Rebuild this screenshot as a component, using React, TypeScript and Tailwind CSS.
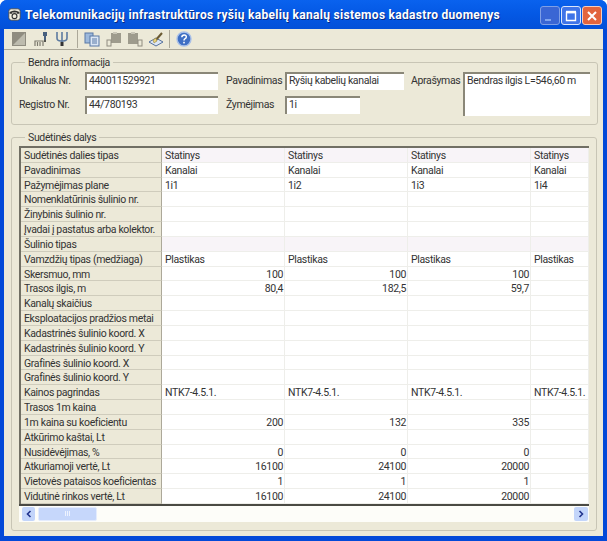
import type { ReactNode } from 'react'

const rows: { label: string; cells: string[]; right?: boolean; tint?: boolean }[] = [
  { label: 'Sudėtinės dalies tipas', cells: ['Statinys', 'Statinys', 'Statinys', 'Statinys'], tint: true },
  { label: 'Pavadinimas', cells: ['Kanalai', 'Kanalai', 'Kanalai', 'Kanalai'] },
  { label: 'Pažymėjimas plane', cells: ['1i1', '1i2', '1i3', '1i4'] },
  { label: 'Nomenklatūrinis šulinio nr.', cells: [] },
  { label: 'Žinybinis šulinio nr.', cells: [] },
  { label: 'Įvadai į pastatus arba kolektor.', cells: [] },
  { label: 'Šulinio tipas', cells: [], tint: true },
  { label: 'Vamzdžių tipas (medžiaga)', cells: ['Plastikas', 'Plastikas', 'Plastikas', 'Plastikas'] },
  { label: 'Skersmuo, mm', cells: ['100', '100', '100', ''], right: true },
  { label: 'Trasos ilgis, m', cells: ['80,4', '182,5', '59,7', ''], right: true },
  { label: 'Kanalų skaičius', cells: [] },
  { label: 'Eksploatacijos pradžios metai', cells: [] },
  { label: 'Kadastrinės šulinio koord. X', cells: [] },
  { label: 'Kadastrinės šulinio koord. Y', cells: [] },
  { label: 'Grafinės šulinio koord. X', cells: [] },
  { label: 'Grafinės šulinio koord. Y', cells: [] },
  { label: 'Kainos pagrindas', cells: ['NTK7-4.5.1.', 'NTK7-4.5.1.', 'NTK7-4.5.1.', 'NTK7-4.5.1.'] },
  { label: 'Trasos 1m kaina', cells: [] },
  { label: '1m kaina su koeficientu', cells: ['200', '132', '335', ''], right: true },
  { label: 'Atkūrimo kaštai, Lt', cells: [] },
  { label: 'Nusidėvėjimas, %', cells: ['0', '0', '0', ''], right: true },
  { label: 'Atkuriamoji vertė, Lt', cells: ['16100', '24100', '20000', ''], right: true },
  { label: 'Vietovės pataisos koeficientas', cells: ['1', '1', '1', ''], right: true },
  { label: 'Vidutinė rinkos vertė, Lt', cells: ['16100', '24100', '20000', ''], right: true },
]

const colClass = ['w-[123px]', 'w-[123px]', 'w-[123px]', 'w-[58px]']

const Field = ({ value, className }: { value: string; className: string }) => (
  <div className={`bg-white border-t-2 border-l-2 border-t-[#8a8778] border-l-[#8a8778] pl-[2px] leading-[14px] whitespace-nowrap overflow-hidden ${className}`}>
    {value}
  </div>
)

const Tool = ({ children, w = 'w-[16px]' }: { children: ReactNode; w?: string }) => (
  <svg viewBox="0 0 16 16" className={`h-[16px] shrink-0 ${w}`}>
    {children}
  </svg>
)

const Sep = () => <div className="w-[1px] h-[18px] bg-[#aca899] shrink-0" />

const Toolbar = () => (
  <div className="h-[21px] shrink-0 flex items-center pl-[7px] border-b border-[#aca899]">
    <Tool>
      <rect x="1" y="1" width="14" height="14" fill="#8f8c80" />
      <path d="M2 14 L14 2 L14 14 Z" fill="#bdbbae" />
    </Tool>
    <div className="w-[7px]" />
    <Tool>
      <path d="M1 15 V10 H9 V15 M3.5 11 V15 M6 11 V15" fill="none" stroke="#7c7a6e" strokeWidth="1.2" />
      <path d="M9 1 H13 V5 H12 V9 H10 V5 H9 Z" fill="#47607f" />
      <path d="M11 9 V11" stroke="#222" strokeWidth="1.5" />
    </Tool>
    <div className="w-[4px]" />
    <Tool>
      <path d="M3 1 V7 Q3 10 7 10 H9 Q13 10 13 7 V1" fill="none" stroke="#5d7aa0" strokeWidth="1.6" />
      <path d="M8 1 V14" stroke="#5d7aa0" strokeWidth="1.6" />
      <rect x="6.5" y="11" width="3" height="4" fill="#333" />
    </Tool>
    <div className="w-[7px]" />
    <Sep />
    <div className="w-[6px]" />
    <Tool>
      <rect x="1" y="2" width="8" height="10" fill="#9db9dc" stroke="#5878a6" />
      <rect x="6" y="5" width="9" height="10" fill="#dbe6f4" stroke="#5878a6" />
      <path d="M8 8 H13 M8 10 H13 M8 12 H13" stroke="#5878a6" />
    </Tool>
    <div className="w-[6px]" />
    <Tool>
      <rect x="5" y="2" width="10" height="10" fill="#9e9b8d" />
      <rect x="1" y="9" width="4" height="6" fill="none" stroke="#8f8c80" />
      <rect x="7" y="1" width="4" height="2" fill="#c9c6b8" />
    </Tool>
    <div className="w-[5px]" />
    <Tool>
      <rect x="1" y="2" width="10" height="11" fill="#9e9b8d" />
      <rect x="11" y="9" width="4" height="6" fill="none" stroke="#8f8c80" />
      <rect x="4" y="1" width="4" height="2" fill="#c9c6b8" />
    </Tool>
    <div className="w-[5px]" />
    <Tool>
      <path d="M1 11 L8 7 L15 11 L8 15 Z" fill="#dce6f5" stroke="#54709c" />
      <path d="M7 10 L14 2" stroke="#6b5a32" strokeWidth="2" />
      <path d="M5 9 L8 7 L9 10 L6 12 Z" fill="#e8d27a" stroke="#8c7a3a" strokeWidth="0.5" />
    </Tool>
    <div className="w-[5px]" />
    <Sep />
    <div className="w-[6px]" />
    <Tool>
      <circle cx="8" cy="8" r="7" fill="#3f6fc4" stroke="#a9c0e8" strokeWidth="1.4" />
      <path d="M5.8 6.2 Q6 4 8.2 4 Q10.4 4 10.3 6 Q10.2 7.2 8.8 7.9 Q8 8.4 8 9.6" fill="none" stroke="#fff" strokeWidth="1.5" />
      <rect x="7.2" y="10.8" width="1.6" height="1.6" fill="#fff" />
    </Tool>
  </div>
)

const WinButton = ({ children, className }: { children: ReactNode; className: string }) => (
  <div className={`w-[20px] h-[19px] rounded-[3px] border flex items-center justify-center shrink-0 ${className}`}>
    <svg viewBox="0 0 14 14" className="w-[14px] h-[14px]">
      {children}
    </svg>
  </div>
)

const TitleBar = () => (
  <div className="h-[29px] shrink-0 flex items-center pl-[8px] pr-[5px] rounded-t-[7px] bg-gradient-to-b from-[#0a62ee] via-[#0458e4] to-[#0350d8]">
    <svg viewBox="0 0 16 16" className="w-[13px] h-[13px] shrink-0">
      <rect x="1" y="1" width="14" height="14" rx="3" fill="#f0ede0" stroke="#444" />
      <path d="M2 5 Q8 1 14 5 V7 H11 V5.5 H5 V7 H2 Z" fill="#333" />
      <circle cx="8" cy="10" r="3" fill="none" stroke="#333" strokeWidth="1.4" />
    </svg>
    <div className="ml-[4px] pt-[1px] flex-1 whitespace-nowrap text-white font-bold text-[12px] tracking-[0.3px] font-['Roboto',sans-serif] [text-shadow:1px_1px_0_#0a2a80]">
      Telekomunikacijų infrastruktūros ryšių kabelių kanalų sistemos kadastro duomenys
    </div>
    <div className="flex gap-[1px] mt-[2px]">
      <WinButton className="bg-[#3a66d4] border-[#7f9fe6]">
        <rect x="2" y="10" width="6" height="2" fill="#7fa4ee" />
      </WinButton>
      <WinButton className="bg-[#3f74e8] border-[#dbe6fb]">
        <path d="M2.5 3.5 H11.5 V11.5 H2.5 Z" fill="none" stroke="#fff" strokeWidth="1.4" />
        <path d="M2 3 H12" stroke="#fff" strokeWidth="2.4" />
      </WinButton>
      <WinButton className="bg-[#e2653e] border-[#f6cdbd]">
        <path d="M3 3 L11 11 M11 3 L3 11" stroke="#fff" strokeWidth="2" />
      </WinButton>
    </div>
  </div>
)

const GeneralInfo = () => (
  <fieldset className="mx-[7px] h-[69px] shrink-0 border border-[#c8c5b5] rounded-[3px] px-[7px]">
    <legend className="ml-[6px] px-[3px] leading-[13px]">Bendra informacija</legend>
    <div className="flex mt-[3px]">
      <div className="w-[66px] shrink-0 flex flex-col gap-[6px]">
        <div className="h-[18px] leading-[18px]">Unikalus Nr.</div>
        <div className="h-[18px] leading-[18px]">Registro Nr.</div>
      </div>
      <div className="w-[134px] shrink-0 flex flex-col gap-[6px]">
        <Field value="440011529921" className="h-[18px] w-[133px]" />
        <Field value="44/780193" className="h-[18px] w-[133px]" />
      </div>
      <div className="w-[59px] shrink-0 ml-[7px] flex flex-col gap-[6px]">
        <div className="h-[18px] leading-[18px] whitespace-nowrap">Pavadinimas</div>
        <div className="h-[18px] leading-[18px]">Žymėjimas</div>
      </div>
      <div className="w-[119px] shrink-0 flex flex-col gap-[6px]">
        <Field value="Ryšių kabelių kanalai" className="h-[18px] w-[119px]" />
        <Field value="1i" className="h-[18px] w-[75px]" />
      </div>
      <div className="w-[52px] shrink-0 ml-[7px] h-[18px] leading-[18px]">Aprašymas</div>
      <Field value="Bendras ilgis L=546,60 m" className="h-[44px] w-[127px]" />
    </div>
  </fieldset>
)

const DataGrid = () => (
  <div className="border-t-2 border-l-2 border-[#716f64] border-b-0">
    {rows.map((row) => (
      <div key={row.label} className="flex h-[14.83px] leading-[15px]">
        <div className="w-[141px] shrink-0 bg-[#ece9d8] border-r border-b border-r-[#aca899] border-b-[#cfccbc] pl-[3px] whitespace-nowrap overflow-hidden">
          {row.label}
        </div>
        {colClass.map((w, c) => (
          <div
            key={c}
            className={`${w} shrink-0 border-r border-b border-[#eeeeea] pl-[3px] pr-[1px] whitespace-nowrap overflow-hidden ${
              row.right ? 'text-right' : ''
            } ${row.tint ? 'bg-[#f8f4f8]' : 'bg-white'}`}
          >
            {row.cells[c] ?? ''}
          </div>
        ))}
      </div>
    ))}
  </div>
)

const ScrollBar = () => (
  <div className="h-[18px] border-t-2 border-[#4a4a44] bg-[#fdfdf9] flex items-center pl-[3px] pr-[1px]">
    <div className="w-[13px] h-[14px] rounded-[2px] bg-[#c3d5fa] flex items-center justify-center">
      <svg viewBox="0 0 8 8" className="w-[8px] h-[8px]">
        <path d="M5.5 1 L2.5 4 L5.5 7" fill="none" stroke="#22348c" strokeWidth="1.6" />
      </svg>
    </div>
    <div className="ml-[3px] w-[59px] h-[14px] rounded-[2px] bg-[#c6d7fb] border border-[#e4ecfd] flex items-center justify-center gap-[1px]">
      <div className="w-[1px] h-[5px] bg-[#eef3fe]" />
      <div className="w-[1px] h-[5px] bg-[#eef3fe]" />
      <div className="w-[1px] h-[5px] bg-[#eef3fe]" />
    </div>
    <div className="flex-1" />
    <div className="w-[14px] h-[14px] rounded-[2px] bg-[#c3d5fa] flex items-center justify-center">
      <svg viewBox="0 0 8 8" className="w-[8px] h-[8px]">
        <path d="M2.5 1 L5.5 4 L2.5 7" fill="none" stroke="#22348c" strokeWidth="1.6" />
      </svg>
    </div>
  </div>
)

const Parts = () => (
  <fieldset className="mx-[7px] mt-[6px] flex-1 min-h-0 border border-[#c8c5b5] rounded-[3px] px-[7px]">
    <legend className="ml-[6px] px-[3px] leading-[13px]">Sudėtinės dalys</legend>
    <div className="mt-[2px]">
      <DataGrid />
      <ScrollBar />
    </div>
  </fieldset>
)

export default function App() {
  return (
    <div className="w-[607px] h-[541px] bg-white overflow-hidden font-['Roboto',sans-serif] text-[10.5px] tracking-[-0.35px] text-[#333]">
      <div className="h-full flex flex-col rounded-t-[7px] bg-[#0349d8]">
        <TitleBar />
        <div className="flex-1 min-h-0 mx-[4px] mb-[5px] bg-[#ece9d8] flex flex-col pb-[5px]">
          <Toolbar />
          <div className="h-[6px] shrink-0" />
          <GeneralInfo />
          <Parts />
        </div>
      </div>
    </div>
  )
}
